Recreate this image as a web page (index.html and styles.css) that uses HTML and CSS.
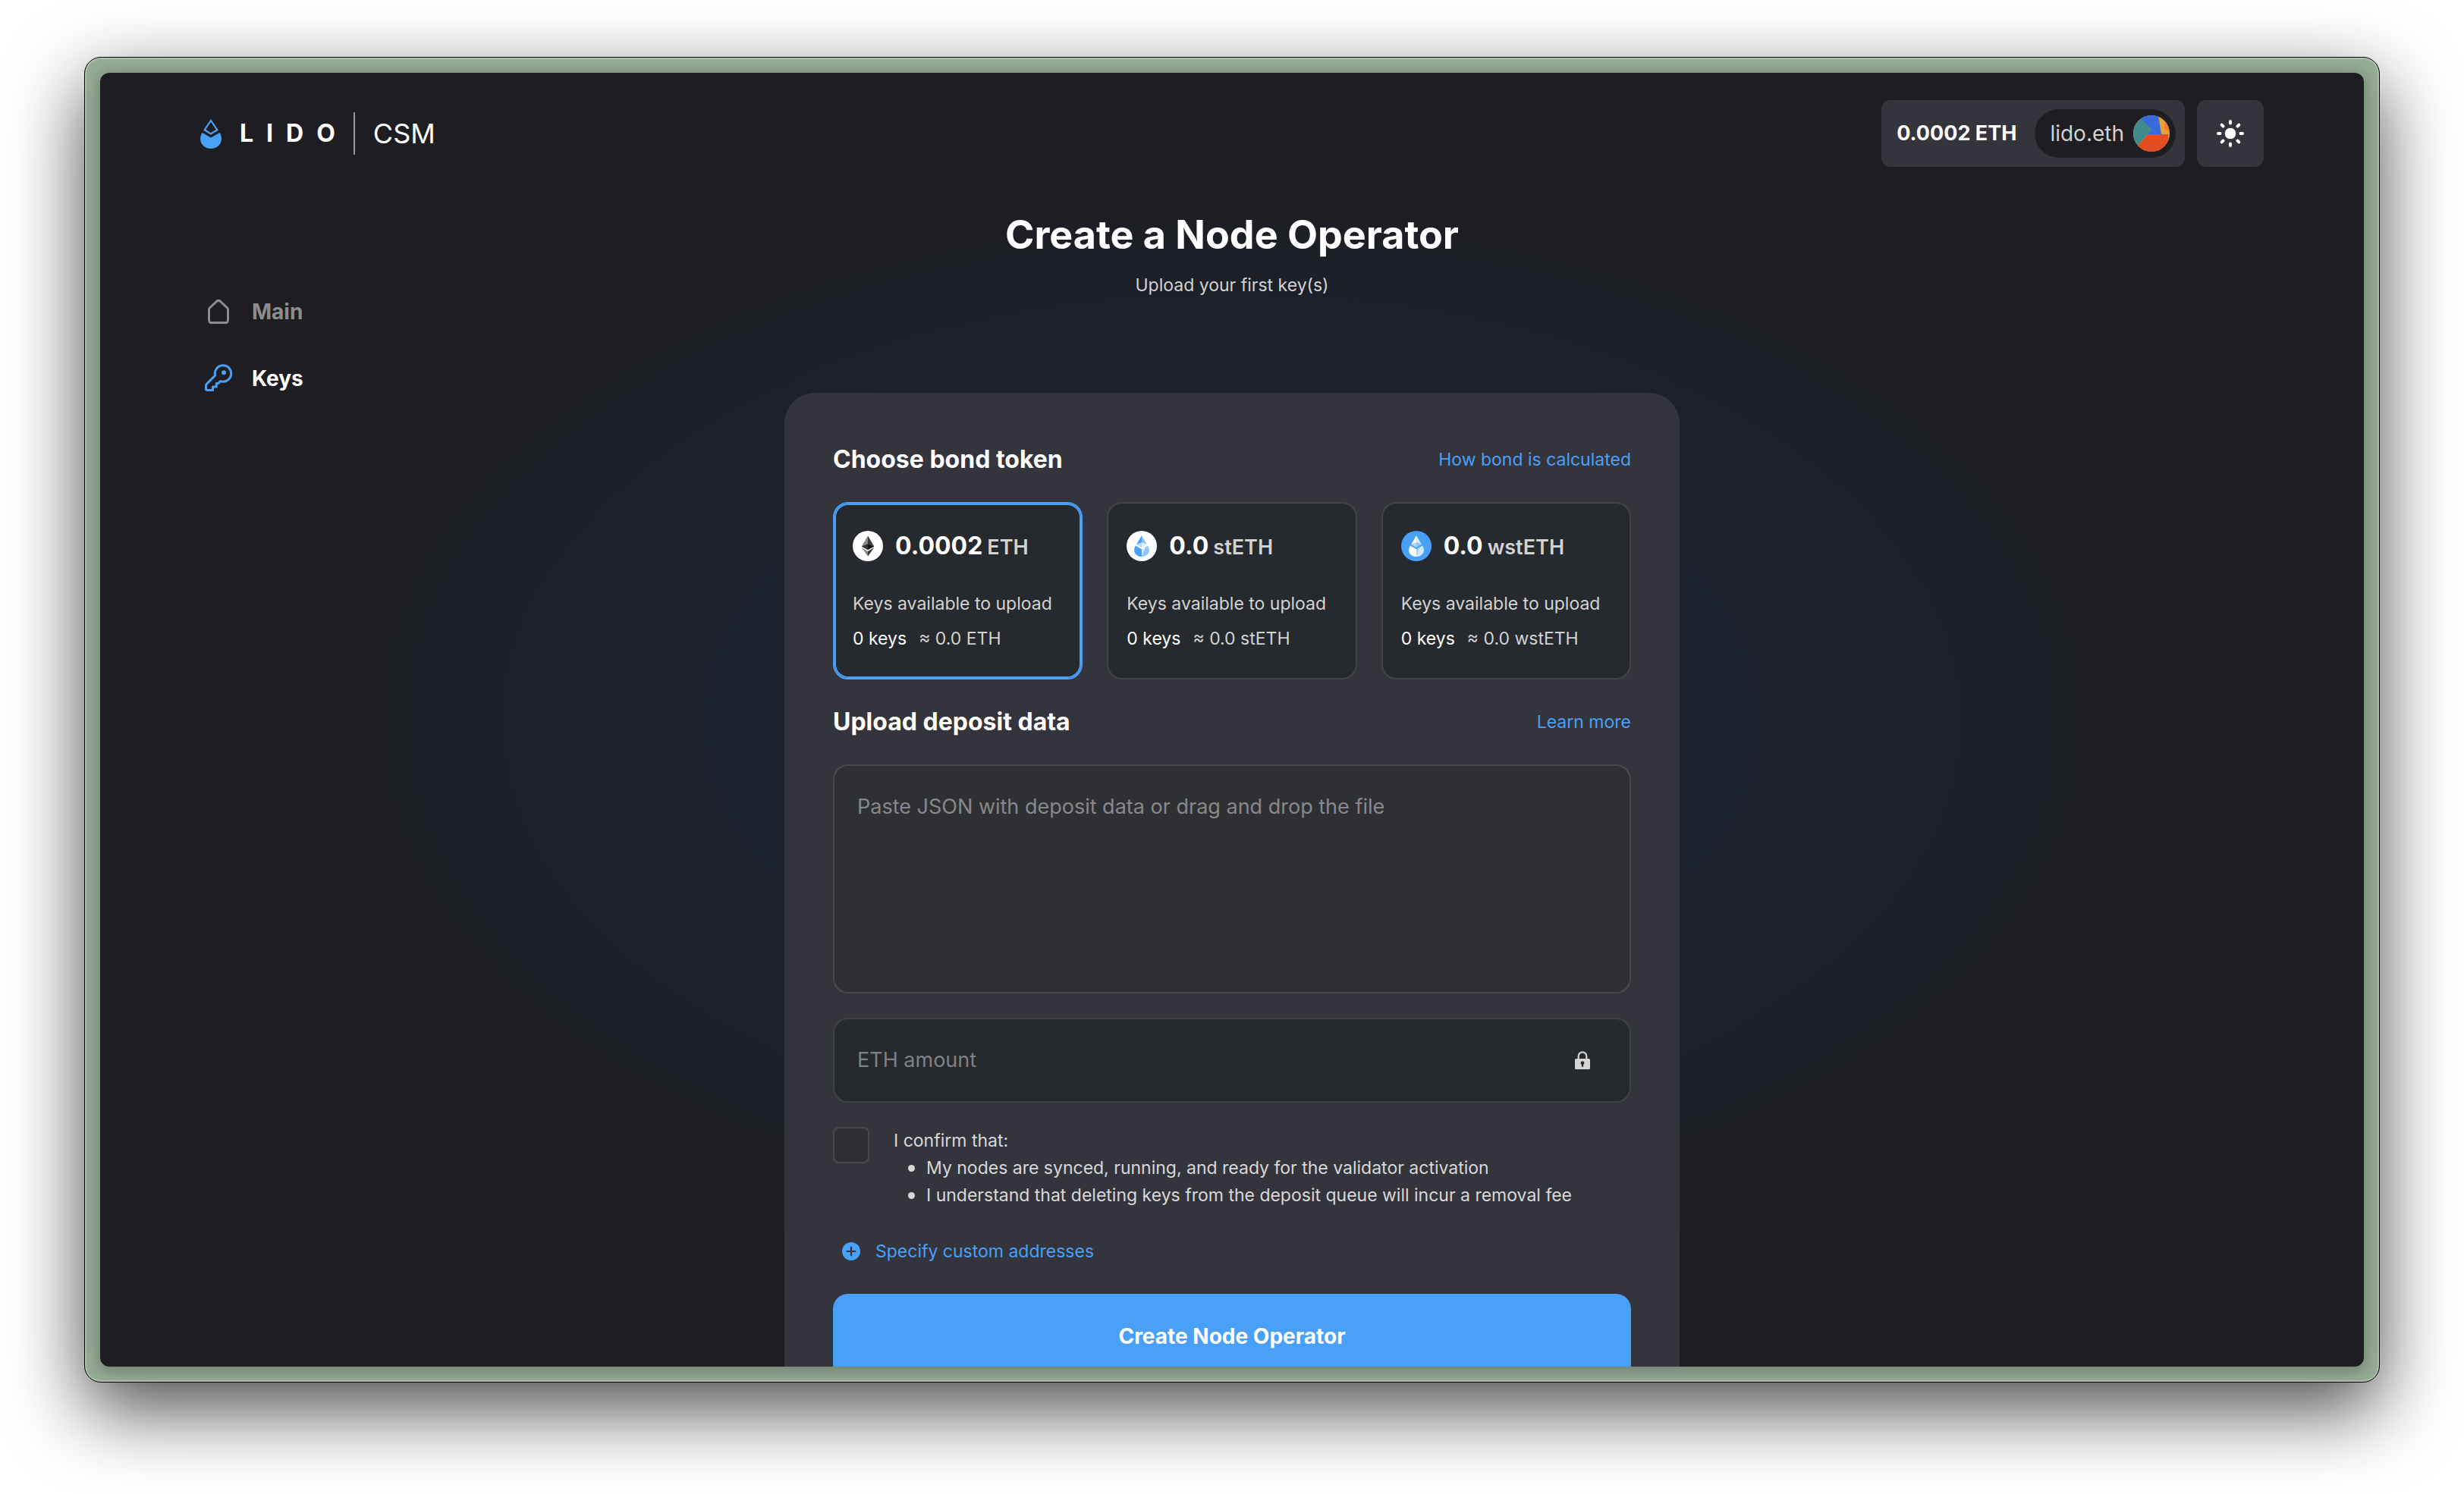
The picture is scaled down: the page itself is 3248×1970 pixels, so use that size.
FILE: index.html
```html
<!DOCTYPE html>
<html lang="en">
<head>
<meta charset="utf-8">
<meta name="viewport" content="width=device-width, initial-scale=1">
<title>Create a Node Operator | Lido CSM</title>
<link rel="stylesheet" href="styles.css">
</head>
<body>
<div class="frame">
  <div class="app">
    <header class="header">
      <a class="brand" href="#">
        <svg class="brand-mark" viewBox="0 0 28 39" aria-hidden="true">
          <path d="M14 2 22.4 14.3 14 19.4 5.6 14.3z" fill="none" stroke="#48a0f8" stroke-width="2.2"/>
          <path d="M2.6 18 14 24.6 25.4 18C32 28 25 39 14 39S-4 28 2.6 18z" fill="#48a0f8"/>
        </svg>
        <span class="wordmark"><span>L</span><span>I</span><span>D</span><span>O</span></span>
        <span class="product">CSM</span>
      </a>
      <div class="controls">
        <button class="wallet" type="button">
          <span class="balance">0.0002 ETH</span>
          <span class="account">lido.eth
            <svg class="avatar" viewBox="0 0 48 48" aria-hidden="true">
              <clipPath id="round"><circle cx="24" cy="24" r="24"/></clipPath>
              <g clip-path="url(#round)">
                <path d="M0 0h48v48H0z" fill="#e8a13a"/>
                <path d="M42 8h6v12l-7-1z" fill="#f07c2c"/>
                <path d="M10 4 18 0h15l4 25H18z" fill="#3a69dd"/>
                <path d="M0 0h6l4 4 15 15-6 6L6 40l-6 8z" fill="#3f8a8c"/>
                <path d="M19.500 25H46v6l-2 17H0v-2l6-6z" fill="#e44c24"/>
              </g>
            </svg>
          </span>
        </button>
        <button class="theme" type="button" aria-label="Switch theme">
          <svg viewBox="0 0 36 36" aria-hidden="true">
            <circle cx="18" cy="18" r="7.300" fill="#fff"/>
            <path d="M18 2v2.500M18 31.500V34M2 18h2.500M31.500 18H34M6.700 6.700l1.800 1.800M27.500 27.500l1.800 1.800M6.700 29.300l1.800-1.800M27.500 8.500l1.800-1.800" stroke="#fff" stroke-width="4" stroke-linecap="round"/>
          </svg>
        </button>
      </div>
    </header>

    <div class="layout">
      <nav class="nav">
        <a class="nav-link" href="#">
          <svg viewBox="0 0 48 48" aria-hidden="true"><path d="M11.500 21a3 3 0 0 1 1-2.200l9.400-8.600a3 3 0 0 1 4.200 0l9.400 8.600a3 3 0 0 1 1 2.200v14.500a3 3 0 0 1-3 3h-19a3 3 0 0 1-3-3z" fill="none" stroke="currentColor" stroke-width="3"/></svg>
          Main
        </a>
        <a class="nav-link active" href="#" aria-current="page">
          <svg viewBox="0 0 48 48" aria-hidden="true"><path d="M26.500 27.600A10.700 10.700 0 1 0 19.600 20L8.400 31.400a3 3 0 0 0-.9 2.100V38a1.500 1.500 0 0 0 1.500 1.500h7.500V35h4.800v-4.600h2.500z" fill="none" stroke="#48a0f8" stroke-width="3" stroke-linejoin="round"/><circle cx="31" cy="16.300" r="3" fill="#48a0f8"/></svg>
          Keys
        </a>
      </nav>

      <main class="content">
        <h1>Create a Node Operator</h1>
        <p class="subtitle">Upload your first key(s)</p>

        <form class="card">
          <div class="section-head">
            <h2>Choose bond token</h2>
            <a href="#">How bond is calculated</a>
          </div>

          <div class="tokens">
            <label class="token">
              <input type="radio" name="token" checked>
              <span class="token-top">
                <svg viewBox="0 0 40 40" aria-hidden="true">
                  <circle cx="20" cy="20" r="20" fill="#fff"/>
                  <path d="M20 6.500v10.200l-8.300 3.700z" fill="#8a8a8a"/>
                  <path d="M20 6.500v10.200l8.300 3.700z" fill="#3c3c3b"/>
                  <path d="M20 16.700v8.600l-8.300-4.900z" fill="#343434"/>
                  <path d="M20 16.700v8.600l8.300-4.900z" fill="#141414"/>
                  <path d="M11.700 22 20 26.900v6.600z" fill="#8a8a8a"/>
                  <path d="M28.300 22 20 26.900v6.600z" fill="#343434"/>
                </svg>
                <span class="amount">0.0002</span><span class="unit">ETH</span>
              </span>
              <span class="token-note">Keys available to upload</span>
              <span class="token-keys"><span class="count">0 keys</span><span>≈ 0.0 ETH</span></span>
            </label>
            <label class="token">
              <input type="radio" name="token">
              <span class="token-top">
                <svg viewBox="0 0 40 40" aria-hidden="true">
                  <circle cx="20" cy="20" r="20" fill="#fff"/>
                  <path d="M20 6v9.500L13 18z" fill="#48a0f8"/>
                  <path d="M20 6v9.500l7 2.500z" fill="#91c6fb"/>
                  <path d="M20 15.500V22l-7-4z" fill="#b6dafd"/>
                  <path d="M20 15.500V22l7-4z" fill="#dcedfe"/>
                  <path d="M11.900 19.500 20 24.200V34c-8.500 0-12.500-7.500-8.100-14.500z" fill="#48a0f8"/>
                  <path d="M28.100 19.500 20 24.200V34c8.500 0 12.500-7.500 8.100-14.500z" fill="#91c6fb"/>
                  <path d="M20 24.200l5-2.900L20 34z" fill="#dcedfe"/>
                </svg>
                <span class="amount">0.0</span><span class="unit">stETH</span>
              </span>
              <span class="token-note">Keys available to upload</span>
              <span class="token-keys"><span class="count">0 keys</span><span>≈ 0.0 stETH</span></span>
            </label>
            <label class="token">
              <input type="radio" name="token">
              <span class="token-top">
                <svg viewBox="0 0 40 40" aria-hidden="true">
                  <circle cx="20" cy="20" r="20" fill="#48a0f8"/>
                  <path d="M20 6v9.500L13 18z" fill="#fff"/>
                  <path d="M20 6v9.500l7 2.500z" fill="#d3e8fd"/>
                  <path d="M20 15.500V22l-7-4z" fill="#b6d9fc"/>
                  <path d="M20 15.500V22l7-4z" fill="#8fc4fa"/>
                  <path d="M11.900 19.500 20 24.200V34c-8.500 0-12.500-7.500-8.100-14.500z" fill="#fff"/>
                  <path d="M28.100 19.500 20 24.200V34c8.500 0 12.500-7.500 8.100-14.500z" fill="#d3e8fd"/>
                  <path d="M20 24.200l5-2.900L20 34z" fill="#a4d0fb"/>
                </svg>
                <span class="amount">0.0</span><span class="unit">wstETH</span>
              </span>
              <span class="token-note">Keys available to upload</span>
              <span class="token-keys"><span class="count">0 keys</span><span>≈ 0.0 wstETH</span></span>
            </label>
          </div>

          <div class="section-head">
            <h2>Upload deposit data</h2>
            <a href="#">Learn more</a>
          </div>

          <textarea class="deposit" aria-label="Deposit data" placeholder="Paste JSON with deposit data or drag and drop the file"></textarea>

          <div class="field">
            <input type="text" aria-label="ETH amount" placeholder="ETH amount" readonly>
            <svg viewBox="0 0 24 24" aria-hidden="true">
              <path d="M6.700 11V6.600a5.300 5.300 0 0 1 10.600 0V11" fill="none" stroke="#d4d4d5" stroke-width="2.200"/>
              <path fill-rule="evenodd" d="M3.500 10h17a1.500 1.500 0 0 1 1.500 1.500v11a1.500 1.500 0 0 1-1.500 1.500h-17A1.500 1.500 0 0 1 2 22.500v-11A1.500 1.500 0 0 1 3.500 10zM12 13.200a2.500 2.500 0 0 0-1.300 4.600l.4 3h1.800l.4-3A2.500 2.500 0 0 0 12 13.200z" fill="#d4d4d5"/>
            </svg>
          </div>

          <div class="confirm">
            <input type="checkbox" id="confirm">
            <div class="confirm-text">
              <label for="confirm">I confirm that:</label>
              <ul>
                <li>My nodes are synced, running, and ready for the validator activation</li>
                <li>I understand that deleting keys from the deposit queue will incur a removal fee</li>
              </ul>
            </div>
          </div>

          <button class="custom" type="button">
            <svg viewBox="0 0 24 24" aria-hidden="true"><circle cx="12" cy="12" r="12" fill="#48a0f8"/><path d="M12 6.500v11M6.500 12h11" stroke="#34343d" stroke-width="2.200" stroke-linecap="round"/></svg>
            Specify custom addresses
          </button>

          <button class="submit" type="submit">Create Node Operator</button>
        </form>
      </main>
    </div>
  </div>
</div>
</body>
</html>
```
FILE: styles.css
```css
* { box-sizing: border-box; }

body {
  margin: 0;
  height: 100vh;
  padding: 75px 111px 147px;
  display: flex;
  background: #fff;
  color: #fff;
  font: 400 23px/40px Inter, "Liberation Sans", sans-serif;
}

h1, h2, p, ul { margin: 0; }
a { color: #48a0f8; text-decoration: none; }
svg { display: block; flex: none; }
button, input, textarea { font: inherit; color: inherit; border: 0; margin: 0; }

.frame {
  flex: 1;
  display: flex;
  min-width: 0;
  padding: 20px;
  border: 1px solid #000;
  border-radius: 22px;
  background: #94ab95;
  box-shadow: 0 36px 100px rgba(0, 0, 0, .7), inset 0 0 0 2px rgba(255, 255, 255, .25);
}

.app {
  flex: 1;
  min-width: 0;
  overflow: hidden;
  border-radius: 12px;
  background: radial-gradient(ellipse 46% 47% at 50% 50%, #1b2433, #1c222d 50%, #1e1d21);
  box-shadow: 0 4px 20px rgba(0, 0, 0, .3);
}

/* Header */
.header {
  display: flex;
  justify-content: space-between;
  align-items: center;
  padding: 36px 132px 0;
}
.brand { display: flex; align-items: center; color: #fff; }
.brand-mark { width: 28px; height: 39px; margin-right: 24px; }
.wordmark { display: flex; gap: 17px; font-size: 32px; font-weight: 700; }
.product {
  margin-left: 24px;
  padding-left: 24px;
  border-left: 2px solid #98989c;
  font-size: 36px;
  line-height: 56px;
}
.controls { display: flex; gap: 16px; }
.wallet, .theme { height: 88px; border-radius: 12px; background: #34343d; }
.wallet {
  display: flex;
  align-items: center;
  gap: 24px;
  padding: 0 12px 0 20px;
}
.balance { font-size: 27px; font-weight: 700; }
.account {
  display: flex;
  align-items: center;
  gap: 12px;
  height: 64px;
  padding: 0 8px 0 20px;
  border-radius: 32px;
  background: #1e1d21;
  color: #d2d2d3;
  font-size: 28px;
}
.avatar { width: 48px; height: 48px; }
.theme { display: grid; place-items: center; width: 88px; padding: 0; }
.theme svg { width: 36px; height: 36px; }

/* Page columns */
.layout {
  display: grid;
  grid-template-columns: 1fr minmax(0, 1180px) 1fr;
  padding: 0 132px;
}
.nav {
  display: flex;
  flex-direction: column;
  align-items: flex-start;
  gap: 40px;
  padding-top: 167px;
}
.nav-link {
  display: flex;
  align-items: center;
  gap: 20px;
  height: 48px;
  color: #8c8c8f;
  font-size: 28px;
  font-weight: 700;
}
.nav-link.active { color: #fff; }
.nav-link svg { width: 48px; height: 48px; }

.content { padding-top: 58px; }
h1 { font-size: 52px; line-height: 64px; font-weight: 700; text-align: center; }
.subtitle { margin-top: 14px; color: #d2d2d3; text-align: center; }

/* Form card */
.card {
  display: flex;
  flex-direction: column;
  gap: 32px;
  margin-top: 122px;
  padding: 64px;
  border-radius: 40px;
  background: #34343d;
}
.section-head {
  display: flex;
  justify-content: space-between;
  align-items: center;
  height: 48px;
}
h2 { font-size: 32px; line-height: 48px; font-weight: 700; }

.tokens { display: grid; grid-template-columns: repeat(3, minmax(0, 1fr)); gap: 32px; }
.token {
  display: flex;
  flex-direction: column;
  padding: 36px 24px 32px;
  border: 2px solid #424448;
  border-radius: 20px;
  background: #26292d;
  color: #d2d2d3;
  position: relative;
}
.token:has(input:checked) { border-color: #48a0f8; box-shadow: inset 0 0 0 2px #48a0f8; }
.token input { position: absolute; opacity: 0; }
.token-top { display: flex; align-items: baseline; height: 40px; }
.token-top svg { width: 40px; height: 40px; margin-right: 16px; align-self: center; }
.amount { color: #fff; font-size: 32px; font-weight: 700; }
.unit { margin-left: 6px; font-size: 27px; font-weight: 600; }
.token-note { margin-top: 36px; }
.token-keys { display: flex; gap: 16px; margin-top: 6px; }
.count { color: #fff; }

.deposit, .field { border: 2px solid #48494c; border-radius: 20px; font-size: 27px; line-height: 48px; }
.deposit {
  display: block;
  height: 302px;
  padding: 30px;
  background: #2f3034;
  resize: none;
}
.deposit::placeholder { color: #88888b; opacity: 1; }
.field {
  display: flex;
  align-items: center;
  height: 112px;
  padding: 0 50px 0 30px;
  border-color: #404346;
  background: #26292d;
}
.field input { flex: 1; padding: 0; background: none; }
.field input::placeholder { color: #7f8284; opacity: 1; }
.field svg { width: 24px; height: 24px; }

.confirm { display: flex; gap: 32px; color: #d8d8d9; line-height: 36px; }
.confirm input {
  appearance: none;
  width: 48px;
  height: 48px;
  border: 2px solid #48494c;
  border-radius: 8px;
  background: #2f3034;
}
.confirm label { display: block; }
.confirm ul { padding: 0; list-style: none; }
.confirm li { display: flex; align-items: center; gap: 15px; padding-left: 19px; }
.confirm li::before { content: ""; width: 9px; height: 9px; border-radius: 50%; background: currentColor; }

.custom {
  display: flex;
  align-items: center;
  align-self: flex-start;
  gap: 20px;
  height: 48px;
  padding: 0 12px;
  background: none;
  color: #48a0f8;
}
.custom svg { width: 24px; height: 24px; }
.submit {
  height: 112px;
  border-radius: 20px;
  background: #48a0f8;
  font-size: 28px;
  font-weight: 700;
}
```
